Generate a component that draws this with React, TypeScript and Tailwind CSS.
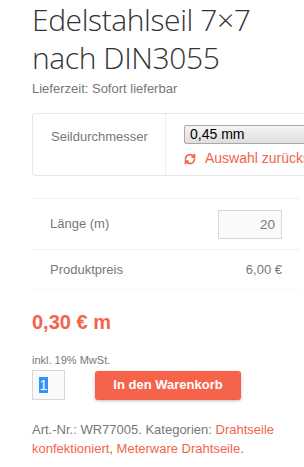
import { RefreshCw } from 'lucide-react'

export default function App() {
  return (
    <div className="w-[304px] h-[467px] overflow-hidden bg-white font-['Liberation_Sans',Arial,sans-serif] text-[#777]">
      <div className="pl-8 pt-[1px]">
        <h1 className="font-['Open_Sans',sans-serif] font-light text-[30px] leading-[38px] text-[#333] tracking-[-0.4px]">
          Edelstahlseil 7×7 nach DIN3055
        </h1>
        <p className="text-[13px] leading-4 mt-[4px]">Lieferzeit: Sofort lieferbar</p>

        <div className="mt-[16px] w-[320px] h-[63px] border border-[#e6e6e6] rounded-[3px] flex">
          <div className="w-[133px] shrink-0 border-r border-dotted border-[#ddd] pl-[18px] pt-[13px] text-[13px]">Seildurchmesser</div>
          <div className="pl-[18px] pt-[11px] shrink-0">
            <div className="h-[19px] w-[200px] border border-[#a9a9a9] rounded-[2px] bg-gradient-to-b from-[#f4f4f4] to-[#dedede] text-black text-[14px] leading-[17px] pl-[5px]">
              0,45 mm
            </div>
            <div className="flex items-center gap-[9px] mt-[4px] text-[#f4634a] text-[14px] whitespace-nowrap">
              <RefreshCw size={12} strokeWidth={3.5} />
              <span>Auswahl zurücksetzen</span>
            </div>
          </div>
        </div>

        <div className="mt-[22px] w-[268px] border-t border-[#f0f0f0]">
          <div className="flex items-center justify-between px-[18px] h-[51px] border-b border-[#f2f2f2] text-[13px]">
            <span>Länge (m)</span>
            <div className="w-[64px] h-[29px] border border-[#d9d9d9] bg-[#fafafa] text-right pr-[6px] leading-[27px] text-[13.5px]">20</div>
          </div>
          <div className="flex items-center justify-between px-[18px] h-[40px] border-b border-[#f7f7f7] text-[13px]">
            <span>Produktpreis</span>
            <span>6,00 €</span>
          </div>
        </div>

        <p className="mt-[20px] text-[#f4634a] font-bold text-[20px] leading-6">0,30 € m</p>
        <p className="mt-[20px] text-[11px] leading-3">inkl. 19% MwSt.</p>

        <div className="flex items-center mt-[4px]">
          <div className="w-[33px] h-[30px] border border-[#d9d9d9] bg-[#fafafa] pl-[6px] flex items-center">
            <span className="bg-[#3390ff] text-white text-[14px] leading-[16px] px-[0.5px]">1</span>
          </div>
          <button className="ml-[30px] w-[146px] h-[29px] bg-[#f4634a] rounded-[3px] text-white font-bold text-[13px] shadow-[0_1px_3px_rgba(0,0,0,0.25)]">
            In den Warenkorb
          </button>
        </div>

        <p className="mt-[20px] text-[13px] leading-[19px] w-[260px]">
          Art.-Nr.: WR77005. Kategorien: <span className="text-[#f4634a]">Drahtseile konfektioniert</span>,{' '}
          <span className="text-[#f4634a]">Meterware Drahtseile</span>.
        </p>
      </div>
    </div>
  )
}
